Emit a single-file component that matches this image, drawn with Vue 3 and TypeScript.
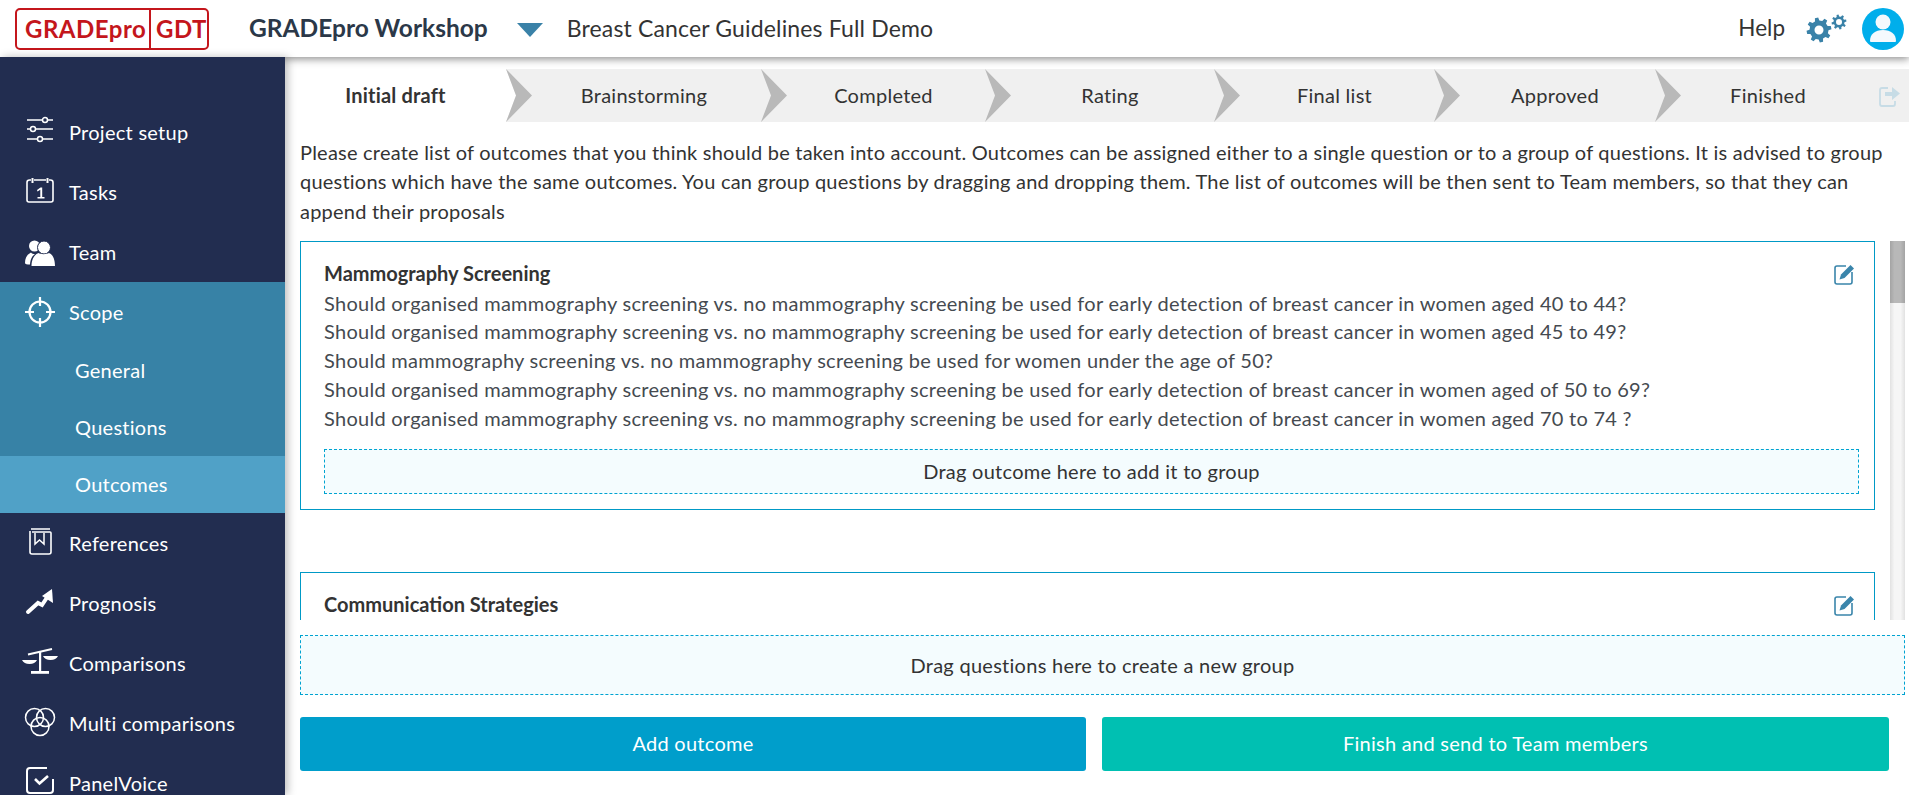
<script setup lang="ts">
interface NavItem {
  key: string
  label: string
}

const topItems: NavItem[] = [
  { key: 'setup', label: 'Project setup' },
  { key: 'tasks', label: 'Tasks' },
  { key: 'team', label: 'Team' },
]

const bottomItems: NavItem[] = [
  { key: 'references', label: 'References' },
  { key: 'prognosis', label: 'Prognosis' },
  { key: 'comparisons', label: 'Comparisons' },
  { key: 'multi', label: 'Multi comparisons' },
  { key: 'panel', label: 'PanelVoice' },
]

const tabs = [
  { label: 'Initial draft', width: 221 },
  { label: 'Brainstorming', width: 255 },
  { label: 'Completed', width: 224 },
  { label: 'Rating', width: 229 },
  { label: 'Final list', width: 220 },
  { label: 'Approved', width: 221 },
  { label: 'Finished', width: 205 },
]

const questions = [
  'Should organised mammography screening vs. no mammography screening be used for early detection of breast cancer in women aged 40 to 44?',
  'Should organised mammography screening vs. no mammography screening be used for early detection of breast cancer in women aged 45 to 49?',
  'Should mammography screening vs. no mammography screening be used for women under the age of 50?',
  'Should organised mammography screening vs. no mammography screening be used for early detection of breast cancer in women aged of 50 to 69?',
  'Should organised mammography screening vs. no mammography screening be used for early detection of breast cancer in women aged 70 to 74 ?',
]

// gear outline with a round hole, teeth as flat trapezoids
function gearPath(cx: number, cy: number, outer: number, root: number, hole: number, teeth: number) {
  const pts: string[] = []
  const step = (Math.PI * 2) / teeth
  for (let i = 0; i < teeth; i++) {
    const a = i * step - 0.2
    const corners: [number, number][] = [
      [root, a - step * 0.3],
      [outer, a - step * 0.17],
      [outer, a + step * 0.17],
      [root, a + step * 0.3],
    ]
    for (const [r, t] of corners) {
      pts.push(`${(cx + r * Math.cos(t)).toFixed(2)} ${(cy + r * Math.sin(t)).toFixed(2)}`)
    }
  }
  const ring = `M${cx - hole} ${cy}a${hole} ${hole} 0 1 0 ${hole * 2} 0a${hole} ${hole} 0 1 0 ${-hole * 2} 0z`
  return `M${pts.join('L')}z${ring}`
}

const bigGear = gearPath(13, 17, 12.5, 9.5, 4.5, 8)
const smallGear = gearPath(33, 9, 7.5, 5.5, 3, 8)
</script>

<template>
  <div class="app">
    <header class="topbar">
      <div class="logo">
        <span class="logo-main">GRADEpro</span>
        <span class="logo-sub">GDT</span>
      </div>
      <div class="workshop">GRADEpro Workshop</div>
      <svg class="caret" width="26" height="14" viewBox="0 0 26 14"><path d="M0 0h26L13 14z" /></svg>
      <div class="project">Breast Cancer Guidelines Full Demo</div>
      <div class="help">Help</div>
      <svg class="gears" width="42" height="32" viewBox="0 0 42 32">
        <path :d="bigGear" fill-rule="evenodd" />
        <path :d="smallGear" fill-rule="evenodd" />
      </svg>
      <svg class="avatar" width="42" height="42" viewBox="0 0 42 42">
        <circle cx="21" cy="21" r="21" fill="#00aeeb" />
        <circle cx="21" cy="14" r="7.5" fill="#f4f9fd" />
        <path d="M8 33c0-7 5-11 13-11s13 4 13 11q0 1-1 1H9q-1 0-1-1z" fill="#f4f9fd" />
      </svg>
    </header>

    <div class="body">
      <nav class="sidebar">
        <a v-for="item in topItems" :key="item.key" class="nav-item">
          <svg class="nav-icon" width="30" height="30" viewBox="0 0 30 30">
            <g v-if="item.key === 'setup'" fill="none" stroke="#fff" stroke-width="1.5">
              <path d="M2 3h15.500M22.500 3H28M2 12h3.500M10.500 12H28M2 22h10.500M17.500 22H28" />
              <circle cx="20" cy="3" r="2.500" />
              <circle cx="8" cy="12" r="2.500" />
              <circle cx="15" cy="22" r="2.500" />
            </g>
            <g v-else-if="item.key === 'tasks'">
              <path d="M6 3H4.500Q2 3 2 5.500V23q0 2 2 2h22q2 0 2-2V5.500Q28 3 25.500 3H24M9 3h12" fill="none" stroke="#fff" stroke-width="1.600" />
              <path d="M7.500 1v5M22.500 1v5" stroke="#fff" stroke-width="2" />
              <path d="M12 13l3.500-2.500h1.700V20H19.500v1.500h-7V20h2.800v-7.200L12.500 14.500z" fill="#fff" />
            </g>
            <g v-else fill="#fff">
              <circle cx="9.500" cy="9" r="5.500" />
              <path d="M0 26c0-6 3-9 6-10.500 1 1 2 1.500 4 1.800C7 19 5.500 22 5 27.500 2 27.500 0 27 0 26z" />
              <circle cx="19" cy="10.500" r="6.500" stroke="#222d50" stroke-width="1" />
              <path d="M6.500 29c0-8 4-12 7-13 2 1.500 8 1.500 10.500 0 3 1 6 5 6 13z" />
            </g>
          </svg>
          <span>{{ item.label }}</span>
        </a>

        <div class="nav-group">
          <a class="nav-item">
            <svg class="nav-icon" width="30" height="30" viewBox="0 0 30 30">
              <circle cx="15" cy="15" r="10.500" fill="none" stroke="#fff" stroke-width="2.200" />
              <path d="M15 0v9M15 21v9M0 15h9M21 15h9" stroke="#fff" stroke-width="2.200" />
            </svg>
            <span>Scope</span>
          </a>
          <a class="sub-item">General</a>
          <a class="sub-item">Questions</a>
          <a class="sub-item active">Outcomes</a>
        </div>

        <a v-for="item in bottomItems" :key="item.key" class="nav-item">
          <svg class="nav-icon" width="30" height="30" viewBox="0 0 30 30">
            <g v-if="item.key === 'references'" fill="none" stroke="#fff">
              <path d="M6 1h19M5 3v21q0 2 2 2h17q2 0 2-2V5q0-1-1-1H7" stroke-width="1.600" />
              <path d="M10 5v11l4.500-4 4.500 4V5" stroke-width="1.500" />
            </g>
            <g v-else-if="item.key === 'prognosis'">
              <path d="M3 24l10-9 4 2 6-9" fill="none" stroke="#fff" stroke-width="4" stroke-linecap="round" />
              <path d="M27 1l1 14-11-7z" fill="#fff" />
            </g>
            <g v-else-if="item.key === 'comparisons'" fill="#fff">
              <path d="M3 6.500L27 1" fill="none" stroke="#fff" stroke-width="1.800" />
              <rect x="14" y="3" width="2.200" height="21" />
              <rect x="6" y="23" width="18" height="2.800" />
              <path d="M-3 12h15q-2 4-7.500 4T-3 12z" />
              <path d="M18 8h15q-2 4-7.500 4T18 8z" />
            </g>
            <g v-else-if="item.key === 'multi'" fill="none" stroke="#fff" stroke-width="1.500">
              <circle cx="9.500" cy="9.500" r="9" />
              <circle cx="20.500" cy="9.500" r="9" />
              <circle cx="15" cy="18.500" r="9" />
            </g>
            <g v-else fill="none" stroke="#fff">
              <path d="M22 0H5Q2 0 2 3v19q0 3 3 3h20q3 0 3-3V11" stroke-width="2" />
              <path d="M10 11l4.500 4.500L23 8" stroke-width="2.600" />
            </g>
          </svg>
          <span>{{ item.label }}</span>
        </a>
      </nav>

      <main class="main">
        <div class="tabs">
          <div
            v-for="(tab, i) in tabs"
            :key="tab.label"
            class="tab"
            :class="{ current: i === 0 }"
            :style="{ width: tab.width + 'px' }"
          >
            <svg v-if="i > 0" class="chevron" width="26" height="53" viewBox="0 0 26 53">
              <path v-if="i === 1" d="M0 0L10 26.500 0 53z" fill="#fff" />
              <path d="M0 0L26 26.500 0 53 10 26.500z" fill="#b9b9b9" />
            </svg>
            <span class="tab-label">{{ tab.label }}</span>
          </div>
          <div class="tab-export">
            <svg width="21" height="22" viewBox="0 0 21 22">
              <path d="M9 3H3Q1 3 1 5v14q0 2 2 2h11q2 0 2-2v-3" fill="none" stroke="#c7dce6" stroke-width="1.800" />
              <path d="M6 7h7V2l8 6.500-8 6.500v-4H6z" fill="#c7dce6" />
            </svg>
          </div>
        </div>

        <p class="intro">
          Please create list of outcomes that you think should be taken into account. Outcomes can be assigned either to a single question or to a group of questions. It is advised to group<br />
          questions which have the same outcomes. You can group questions by dragging and dropping them. The list of outcomes will be then sent to Team members, so that they can<br />
          append their proposals
        </p>

        <div class="list-wrap">
          <div class="list">
            <section class="group">
              <svg class="edit" width="21" height="22" viewBox="0 0 21 22">
                <path d="M12 3H3Q1 3 1 5v14q0 2 2 2h13q2 0 2-2V9" fill="none" stroke="#3a85ab" stroke-width="1.600" />
                <path d="M5.500 16.500l1.500-5L16.500 2l3.500 3.500-9.500 9.500z" fill="#3a85ab" />
              </svg>
              <h3>Mammography Screening</h3>
              <div v-for="(q, i) in questions" :key="i" class="question">{{ q }}</div>
              <div class="drop drop-inner">Drag outcome here to add it to group</div>
            </section>
            <section class="group">
              <svg class="edit" width="21" height="22" viewBox="0 0 21 22">
                <path d="M12 3H3Q1 3 1 5v14q0 2 2 2h13q2 0 2-2V9" fill="none" stroke="#3a85ab" stroke-width="1.600" />
                <path d="M5.500 16.500l1.500-5L16.500 2l3.500 3.500-9.500 9.500z" fill="#3a85ab" />
              </svg>
              <h3>Communication Strategies</h3>
            </section>
          </div>
          <div class="scrollbar"><div class="thumb"></div></div>
        </div>

        <div class="drop drop-outer">Drag questions here to create a new group</div>

        <div class="actions">
          <button type="button" class="btn btn-add">Add outcome</button>
          <button type="button" class="btn btn-finish">Finish and send to Team members</button>
        </div>
      </main>
    </div>
  </div>
</template>

<style scoped>
.app {
  display: flex;
  flex-direction: column;
  height: 795px;
  overflow: hidden;
  font-family: Lato, "Noto Sans", sans-serif;
  font-size: 20px;
  letter-spacing: 0.27px;
  color: #333;
  background: #fff;
}

.topbar {
  position: relative;
  z-index: 1;
  display: flex;
  align-items: center;
  flex: none;
  height: 57px;
  padding-left: 15px;
  background: #fff;
  box-shadow: 0 2px 8px rgba(0, 0, 0, 0.45);
}

.logo {
  display: flex;
  flex: none;
  width: 194px;
  height: 42px;
  box-sizing: border-box;
  border: 2px solid #c4161c;
  border-radius: 5px;
  color: #c4161c;
  font-weight: 700;
  font-size: 24px;
  line-height: 38px;
  letter-spacing: 0.5px;
}

.logo-main {
  width: 136px;
  padding-left: 8px;
  box-sizing: border-box;
  border-right: 2px solid #c4161c;
}

.logo-sub {
  padding-left: 5px;
}

.workshop {
  margin-left: 40px;
  padding-bottom: 2px;
  font-size: 24.5px;
  font-weight: 700;
  letter-spacing: 0;
  color: #2b3848;
}

.caret {
  margin: 2px 0 0 29px;
  fill: #3a82a8;
}

.project {
  margin-left: 24px;
  padding-bottom: 2px;
  font-size: 23px;
  letter-spacing: 0.15px;
}

.help {
  margin-left: auto;
  padding-bottom: 2px;
  font-size: 22.5px;
  letter-spacing: 0;
}

.gears {
  margin-left: 21px;
  fill: #3a82a8;
}

.avatar {
  margin-left: 14px;
  margin-right: 5px;
}

.body {
  display: flex;
  flex: 1;
  min-height: 0;
}

.sidebar {
  position: relative;
  z-index: 2;
  flex: none;
  width: 285px;
  padding-top: 45px;
  box-sizing: border-box;
  background: #222d50;
  color: #fff;
  box-shadow: 3px 0 8px rgba(0, 0, 0, 0.25);
}

.nav-item {
  display: flex;
  align-items: center;
  gap: 14px;
  height: 60px;
  padding-left: 25px;
}

.nav-icon {
  flex: none;
  overflow: visible;
}

.nav-group {
  background: #3782a6;
}

.sub-item {
  display: flex;
  align-items: center;
  height: 55px;
  padding: 0 0 2px 75px;
}

.sub-item.active {
  background: #50a1c7;
}

.main {
  flex: 1;
  min-width: 0;
  display: flex;
  flex-direction: column;
  padding: 12px 4px 0 15px;
}

.tabs {
  display: flex;
  height: 53px;
  flex: none;
  margin: 0 -4px 0 -15px;
  background: #f0f0f0;
}

.tab {
  display: flex;
  align-items: center;
  flex: none;
  height: 53px;
  background: #f0f0f0;
}

.tab.current {
  background: #fff;
  font-weight: 700;
  letter-spacing: 0.2px;
}

.tab-label {
  flex: 1;
  padding: 0 5px 2px 0;
  text-align: center;
}

.tab.current .tab-label {
  padding-right: 0;
}

.chevron {
  flex: none;
}

.tab-export {
  flex: 1;
  display: flex;
  justify-content: flex-end;
  align-items: center;
  padding-right: 9px;
}

.intro {
  margin: 16px 0 15px;
  line-height: 29.3px;
  letter-spacing: 0.22px;
  white-space: nowrap;
}

.list-wrap {
  display: flex;
  height: 379px;
  flex: none;
}

.list {
  flex: 1;
  min-width: 0;
  overflow: hidden;
  padding-right: 15px;
}

.group {
  position: relative;
  padding: 18px 15px 15px 23px;
  border: 1px solid #0099c6;
  margin-bottom: 62px;
}

.group + .group {
  min-height: 120px;
}

.group h3 {
  margin: -1px 0 1px;
  font-size: 20px;
  line-height: 28.8px;
  font-weight: 700;
  letter-spacing: 0;
}

.question {
  line-height: 28.8px;
  color: #454a50;
  white-space: nowrap;
}

.edit {
  position: absolute;
  top: 21px;
  right: 19px;
}

.drop {
  display: flex;
  align-items: center;
  justify-content: center;
  box-sizing: border-box;
  border: 1px dashed #00a3d1;
  background: #f4fcfe;
}

.drop-inner {
  height: 45px;
  margin-top: 16px;
}

.drop-outer {
  height: 60px;
  margin-top: 15px;
  flex: none;
}

.scrollbar {
  flex: none;
  width: 15px;
  background: linear-gradient(to right, #e2e2e2, #f6f6f6 30%, #f6f6f6 70%, #e2e2e2);
}

.thumb {
  height: 62px;
  background: linear-gradient(to right, #a4a4a4, #b8b8b8 30%, #b8b8b8 70%, #a4a4a4);
}

.actions {
  display: grid;
  grid-template-columns: 786px 787px;
  gap: 16px;
  margin-top: 22px;
}

.btn {
  height: 54px;
  padding: 0 0 2px;
  border: 0;
  border-radius: 3px;
  color: #fff;
  font: inherit;
  letter-spacing: inherit;
}

.btn-add {
  background: #009ecb;
}

.btn-finish {
  background: #00c0b2;
}
</style>

<style>
html,
body {
  margin: 0;
  overflow: hidden;
}
</style>
